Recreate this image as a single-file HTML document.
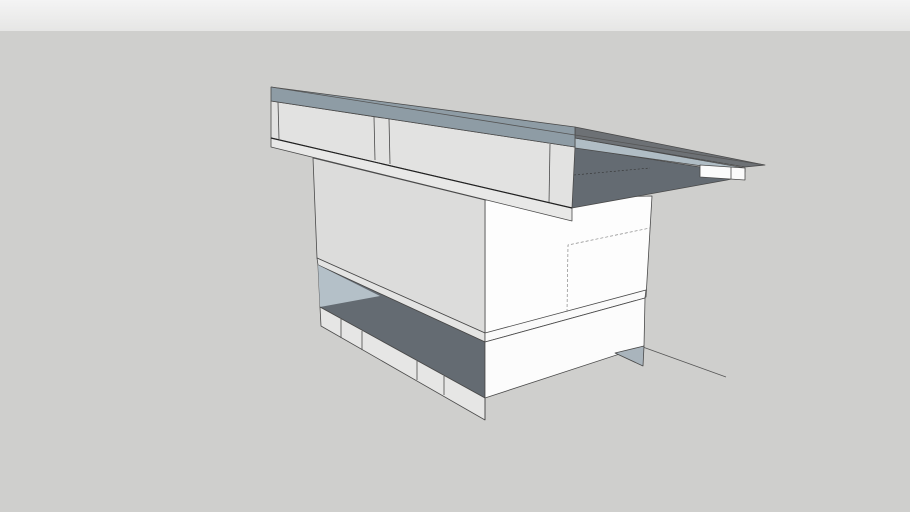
<!DOCTYPE html>
<html><head><meta charset="utf-8"><style>
html,body{margin:0;padding:0;width:910px;height:512px;overflow:hidden;background:#cfcfcd}
svg{display:block}
</style></head><body>
<svg width="910" height="512" viewBox="0 0 910 512" xmlns="http://www.w3.org/2000/svg">
<defs>
<linearGradient id="sky" x1="0" y1="0" x2="0" y2="1"><stop offset="0" stop-color="#f4f4f4"/><stop offset="1" stop-color="#e6e6e5"/></linearGradient>
</defs>
<rect x="0" y="0" width="910" height="31" fill="url(#sky)"/>
<rect x="0" y="31" width="910" height="481" fill="#cfcfcd"/>
<g stroke="#4a4a4a" stroke-width="0.8" stroke-linejoin="round">
<line x1="640" y1="346" x2="726" y2="377" stroke="#555"/>
<polygon points="485,200 652,196 646,297 485,340" fill="#fdfdfd"/>
<polygon points="313,158 485,200 485,333 317,258" fill="#dcdcdb"/>
<polygon points="317,258 485,333 485,342 318,265" fill="#e4e4e3"/>
<polygon points="485,333 646,290 645,298 485,342" fill="#fafafa"/>
<polyline points="567,312 568,245 650,228" fill="none" stroke="#888" stroke-dasharray="3,2" stroke-width="0.7"/>
<polygon points="318,265 485,342 485,398 320,307" fill="#646b72"/>
<polygon points="318,265 380,296 320,307" fill="#b4c0c8" stroke="none"/>
<polygon points="485,342 645,298 644,346 485,398" fill="#fcfcfc"/>
<polygon points="615,353 644,346 643,366" fill="#a9b4bc"/>
<polygon points="320,307 485,398 485,420 321,326" fill="#e6e6e5"/>
<line x1="341" y1="319" x2="341" y2="338"/>
<line x1="362" y1="331" x2="362" y2="350"/>
<line x1="417" y1="361" x2="417" y2="380"/>
<line x1="444" y1="376" x2="444" y2="395"/>
<line x1="485" y1="398" x2="485" y2="420"/>
<polygon points="573,147 700,167 745,176 727,180 572,208" fill="#646b72"/>
<polyline points="574,175 650,168" fill="none" stroke="#333" stroke-dasharray="2,2" stroke-width="0.6"/>
<polygon points="575,138 745,168 745,172 575,148" fill="#b0bdc5"/>
<polygon points="575,127 765,165 745,167 575,138" fill="#6d7175"/>
<polygon points="271,101 575,147 572,208 271,138" fill="#e2e2e1"/>
<line x1="278" y1="102" x2="279" y2="139"/>
<line x1="374" y1="117" x2="375" y2="160"/>
<line x1="389" y1="119" x2="390" y2="164"/>
<line x1="550" y1="144" x2="549" y2="203"/>
<polygon points="271,87 575,127 575,147 271,101" fill="#8e9ca5"/>
<line x1="271" y1="87" x2="765" y2="165" stroke="#555"/>
<polygon points="271,138 572,208 572,221 271,147" fill="#e8e8e7"/>
<line x1="271" y1="138" x2="572" y2="208" stroke="#222" stroke-width="1.2"/>
<polygon points="700,165 745,168 745,180 700,177" fill="#fbfbfb"/>
<line x1="731" y1="167" x2="731" y2="179"/>
</g>
</svg>
</body></html>
